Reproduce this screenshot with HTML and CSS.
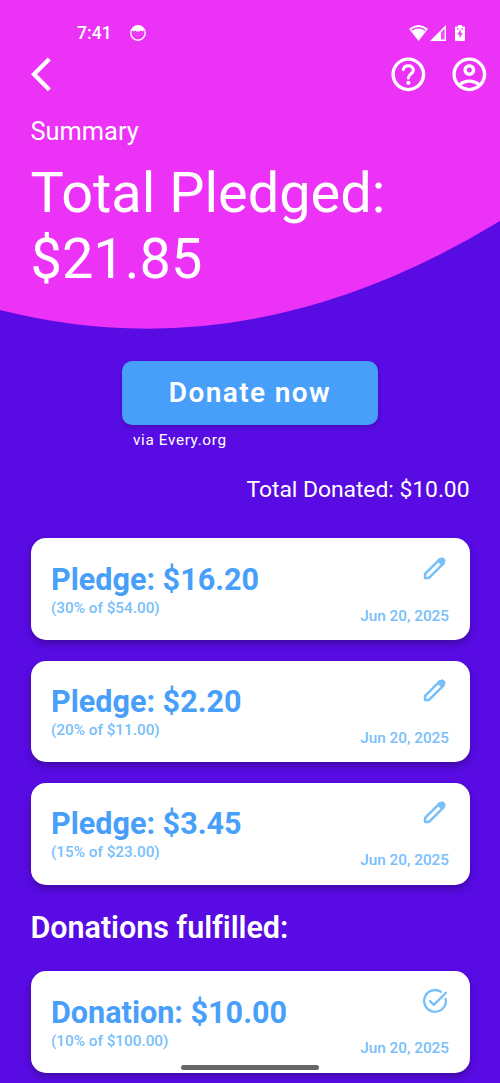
FILE: index.html
```html
<!DOCTYPE html>
<html lang="en">
<head>
<meta charset="utf-8">
<title>Summary</title>
<link rel="stylesheet" href="styles.css">
</head>
<body>
<div class="screen">
  <svg class="wave" viewBox="0 0 500 340"><path d="M0 0H500V221Q250 373.5 0 310Z"/></svg>
  <header class="status">
    <span class="time">7:41</span>
    <svg class="face" viewBox="0 0 16 16"><circle cx="8" cy="8" r="7.200" fill="none" stroke="#fff" stroke-width="1.400"/><path d="M2 5Q3 1 8 1T14 5L12.800 6.600 11 5.600 9.500 6.400H6.500L5 5.600 3.200 6.600Z"/><path d="M4 8h1v1H4zM11 8h1v1h-1zM6 10h1v1H6zM9 10h1v1H9zM7.500 8h1v1h-1z" opacity=".4"/></svg>
    <svg class="wifi" viewBox="0 0 19 16"><path d="M0 3.700Q9.500-3.700 19 3.700L9.500 16Z"/><path d="M2.700 5.200Q9.500 .400 16.300 5.200" fill="none" stroke="#ec32f7" stroke-width="1.400"/></svg>
    <svg class="signal" viewBox="0 0 16 16"><path d="M0 16 16 0V16Z"/><path d="M11 7.200 14.600 3.500V14.600H11Z" fill="#ec32f7" opacity=".85"/></svg>
    <svg class="battery" viewBox="0 0 10 16"><path d="M3 0H7V1.500H9Q10 1.500 10 2.500V15Q10 16 9 16H1Q0 16 0 15V2.500Q0 1.500 1 1.500H3Z"/><path d="M5.800 4.500 2.300 9.500H4.500V13L7.800 8.200H5.800ZM2 3.200H3.500V4.500H2ZM6.500 3.200H8V4.500H6.500Z" fill="#ec32f7"/></svg>
  </header>
  <nav class="toolbar">
    <svg class="icon" viewBox="0 0 24 24"><path d="M11.670 3.870 9.900 2.100 0 12l9.900 9.900 1.770-1.770L3.540 12z"/></svg>
    <svg class="icon help" viewBox="0 0 24 24"><path d="M12 2C6.480 2 2 6.480 2 12s4.480 10 10 10 10-4.480 10-10S17.520 2 12 2zm0 18c-4.410 0-8-3.590-8-8s3.590-8 8-8 8 3.590 8 8-3.590 8-8 8z"/><circle cx="12" cy="17" r="1.250"/><path class="hook" d="M9 9.200Q9.400 6.900 12 6.900T15 9.500C15 11.700 12 11.800 12 14.200"/></svg>
    <svg class="icon account" viewBox="0 0 24 24"><path d="M12 2C6.480 2 2 6.480 2 12s4.480 10 10 10 10-4.480 10-10S17.520 2 12 2zM7.350 18.500C8.660 17.560 10.260 17 12 17s3.340.56 4.650 1.500C15.340 19.440 13.740 20 12 20s-3.340-.56-4.650-1.500zm10.790-1.380C16.450 15.800 14.320 15 12 15s-4.450.8-6.140 2.120C4.700 15.730 4 13.950 4 12c0-4.420 3.580-8 8-8s8 3.580 8 8c0 1.950-.7 3.730-1.860 5.120zM12 6c-1.930 0-3.500 1.570-3.500 3.500S10.070 13 12 13s3.500-1.570 3.500-3.500S13.930 6 12 6zm0 5c-.83 0-1.500-.67-1.500-1.500S11.170 8 12 8s1.500.67 1.500 1.500S12.830 11 12 11z"/></svg>
  </nav>
  <main class="content">
    <p class="label">Summary</p>
    <h1 class="total">Total Pledged:<br>$21.85</h1>
    <div class="donate">
      <button class="button">Donate now</button>
      <span class="via">via Every.org</span>
    </div>
    <p class="donated">Total Donated: $10.00</p>
    <section class="cards">
      <article class="card">
        <div class="info"><h2 class="amount">Pledge: $16.20</h2><p class="detail">(30% of $54.00)</p></div>
        <div class="meta"><svg class="mark" viewBox="0 0 24 24"><path class="shaft" d="M3.500 17.100V20.500H6.900L19.600 7.800 16.200 4.400Z"/><path d="M14 6.400 16.900 3.400Q18.200 2.200 19.400 3.400L20.600 4.600Q21.800 5.800 20.600 7.100L17.600 10Z"/></svg><span class="date">Jun 20, 2025</span></div>
      </article>
      <article class="card">
        <div class="info"><h2 class="amount">Pledge: $2.20</h2><p class="detail">(20% of $11.00)</p></div>
        <div class="meta"><svg class="mark" viewBox="0 0 24 24"><path class="shaft" d="M3.500 17.100V20.500H6.900L19.600 7.800 16.200 4.400Z"/><path d="M14 6.400 16.900 3.400Q18.200 2.200 19.400 3.400L20.600 4.600Q21.800 5.800 20.600 7.100L17.600 10Z"/></svg><span class="date">Jun 20, 2025</span></div>
      </article>
      <article class="card">
        <div class="info"><h2 class="amount">Pledge: $3.45</h2><p class="detail">(15% of $23.00)</p></div>
        <div class="meta"><svg class="mark" viewBox="0 0 24 24"><path class="shaft" d="M3.500 17.100V20.500H6.900L19.600 7.800 16.200 4.400Z"/><path d="M14 6.400 16.900 3.400Q18.200 2.200 19.400 3.400L20.600 4.600Q21.800 5.800 20.600 7.100L17.600 10Z"/></svg><span class="date">Jun 20, 2025</span></div>
      </article>
    </section>
    <h2 class="heading">Donations fulfilled:</h2>
    <article class="card">
      <div class="info"><h2 class="amount">Donation: $10.00</h2><p class="detail">(10% of $100.00)</p></div>
      <div class="meta"><svg class="mark done" viewBox="0 0 24 24"><path d="M17 4.100A9.300 9.300 0 1 0 21.300 12Q21.300 11 21.100 10.200"/><path d="M7.700 12 11 15.300 21.300 5"/></svg><span class="date">Jun 20, 2025</span></div>
    </article>
  </main>
  <div class="home-bar"></div>
</div>
</body>
</html>
```
FILE: styles.css
```css
* { box-sizing: border-box; }
body { margin: 0; font-family: Roboto, sans-serif; color: #fff; }
h1, h2, p { margin: 0; }
svg { display: block; fill: #fff; flex: none; }
.screen { position: relative; height: 1083px; overflow: hidden; background: #580be3; }
.wave { position: absolute; top: 0; left: 0; width: 500px; height: 340px; fill: #ec32f7; }
.status { position: relative; display: flex; align-items: center; height: 54.400px; padding: 11px 35px 0 77px; }
.time { font-size: 17.600px; font-weight: 500; line-height: 20px; }
.face { width: 16px; height: 16px; margin-left: 18.500px; }
.wifi { width: 19px; height: 16px; margin-left: auto; }
.signal { width: 16px; height: 16px; margin-left: 2px; }
.battery { width: 10px; height: 16px; margin-left: 9px; }
.toolbar { position: relative; display: flex; padding: 0 10.300px 0 30.600px; }
.icon { width: 40.700px; height: 40.700px; }
.help { margin-left: auto; }
.hook { fill: none; stroke: #fff; stroke-width: 1.800; stroke-linecap: round; }
.account { margin-left: 20.300px; }
.content { position: relative; padding: 20.900px 30.500px 0; }
.label { font-size: 25.400px; line-height: 30px; }
.total { margin-top: 14.200px; font-size: 55.900px; font-weight: 400; line-height: 66px; }
.donate { display: flex; flex-direction: column; width: 256px; margin: 68.800px auto 0; }
.button { height: 64px; padding: 0; border: 0; border-radius: 10px; background: #489ff9; color: #fff; font: 600 28px/64px Roboto, sans-serif; letter-spacing: 1.400px; box-shadow: 0 2px 4px #0003; }
.via { margin: 6px 0 0 11px; font-size: 15.300px; line-height: 18px; letter-spacing: .64px; }
.donated { margin-top: 27px; text-align: right; font-size: 22.900px; line-height: 28px; letter-spacing: -.05px; }
.cards { display: grid; gap: 20.400px; margin-top: 34.500px; }
.card { display: flex; justify-content: space-between; height: 101.800px; padding: 15.600px 20.500px; border-radius: 15px; background: #fff; color: #77c0fa; box-shadow: 0 4px 7px #0004; }
.info { padding-top: 8px; }
.amount { font-size: 30.550px; font-weight: 700; line-height: 36px; color: #489ff9; }
.detail { margin-top: 1px; font-size: 15.300px; font-weight: 500; line-height: 18px; }
.meta { display: flex; flex-direction: column; align-items: flex-end; justify-content: space-between; }
.mark { width: 28px; height: 28px; fill: #77c0fa; }
.shaft { fill: none; stroke: #77c0fa; stroke-width: 2.200; stroke-linejoin: round; }
.done { fill: none; stroke: #77c0fa; stroke-width: 2; stroke-linecap: round; stroke-linejoin: round; }
.date { font-size: 15.300px; font-weight: 500; line-height: 18px; }
.heading { margin: 25.200px 0; font-size: 30.500px; font-weight: 600; line-height: 36px; letter-spacing: -.04px; }
.home-bar { position: absolute; left: 181px; top: 1065px; width: 138px; height: 5px; border-radius: 3px; background: #666; }
```
